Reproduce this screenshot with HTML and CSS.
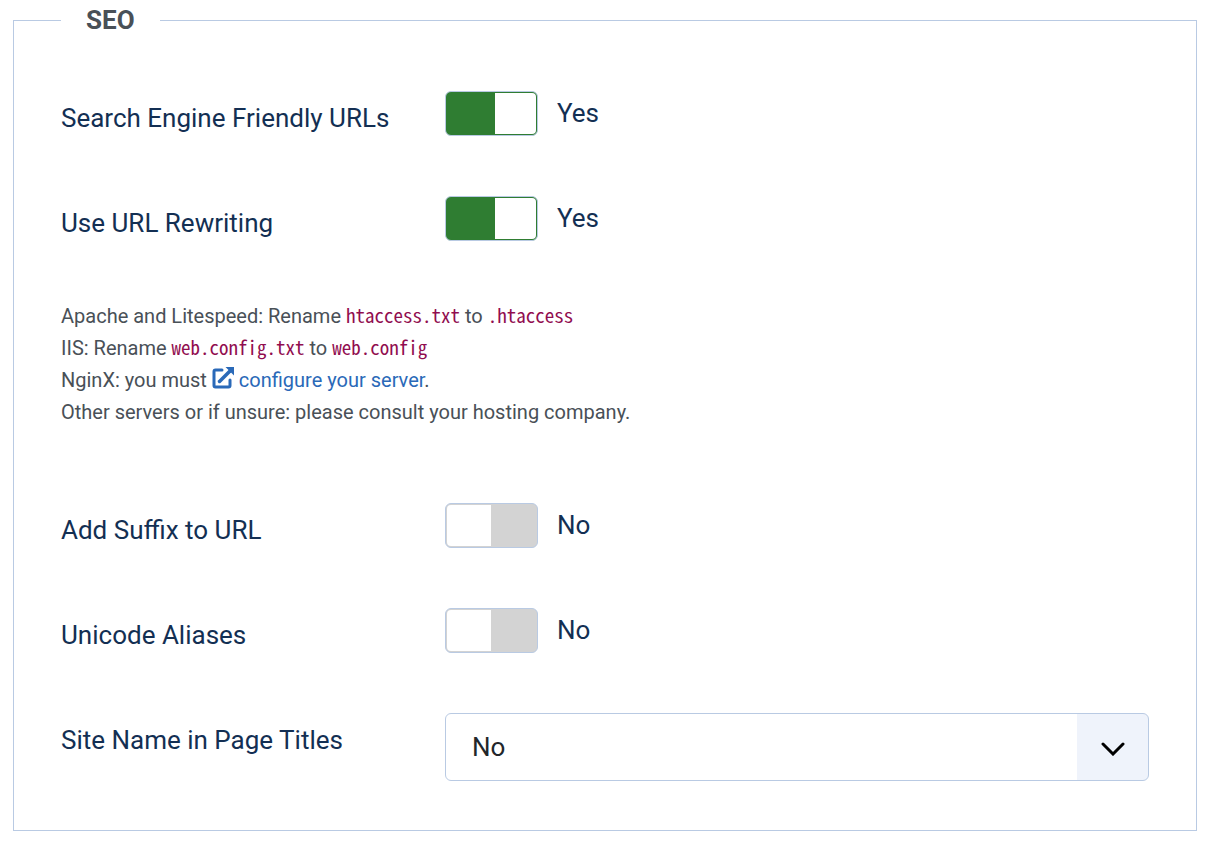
FILE: index.html
```html
<!DOCTYPE html>
<html lang="en">
  <head>
    <meta charset="UTF-8" />
    <meta name="viewport" content="width=device-width, initial-scale=1.0" />
    <title>SEO</title>
    <link rel="stylesheet" href="styles.css">
  </head>
  <body>
    <form>
      <fieldset class="options">
        <legend>SEO</legend>
        <div class="row">
          <label for="sef">Search Engine Friendly URLs</label>
          <div class="switch">
            <input type="checkbox" role="switch" id="sef" name="sef" checked />
            <span class="state"></span>
          </div>
        </div>
        <div class="row">
          <label for="sef_rewrite">Use URL Rewriting</label>
          <div class="switch">
            <input type="checkbox" role="switch" id="sef_rewrite" name="sef_rewrite" aria-describedby="rewrite_help" checked />
            <span class="state"></span>
          </div>
        </div>
        <div class="help" id="rewrite_help">
          Apache and Litespeed: Rename <code>htaccess.txt</code> to <code>.htaccess</code><br>
          IIS: Rename <code>web.config.txt</code> to <code>web.config</code><br>
          NginX: you must <a href="#"><svg class="external" viewBox="0 0 22 22" aria-hidden="true"><path d="M10 3H3.5Q2 3 2 4.500V18.500Q2 20 3.500 20H16.500Q18 20 18 18.500V13" fill="none" stroke="currentColor" stroke-width="3" stroke-linecap="round" /><path d="M7.500 14.500L18 4" fill="none" stroke="currentColor" stroke-width="3.500" stroke-linecap="round" /><path d="M13.500 0H22V8.500Z" fill="currentColor" /></svg> configure your server</a>.<br>
          Other servers or if unsure: please consult your hosting company.
        </div>
        <div class="row">
          <label for="sef_suffix">Add Suffix to URL</label>
          <div class="switch">
            <input type="checkbox" role="switch" id="sef_suffix" name="sef_suffix" />
            <span class="state"></span>
          </div>
        </div>
        <div class="row">
          <label for="unicodeslugs">Unicode Aliases</label>
          <div class="switch">
            <input type="checkbox" role="switch" id="unicodeslugs" name="unicodeslugs" />
            <span class="state"></span>
          </div>
        </div>
        <div class="row">
          <label for="sitename_pagetitles">Site Name in Page Titles</label>
          <div class="select">
            <select id="sitename_pagetitles" name="sitename_pagetitles">
              <option value="1">Before</option>
              <option value="2">After</option>
              <option value="0" selected>No</option>
            </select>
            <svg viewBox="0 0 24 14" aria-hidden="true"><path d="M2 2L12 12L22 2" fill="none" stroke="#000" stroke-width="3" stroke-linecap="round" /></svg>
          </div>
        </div>
      </fieldset>
    </form>
  </body>
</html>
```

FILE: styles.css
```css
body {
  margin: 0;
  background: #fff;
  color: #132f53;
  font-family: Roboto, sans-serif;
  font-size: 26px;
  line-height: 40px;
}
.options {
  margin: 0 9px 0 13px;
  padding: 51px 47px 49px;
  border: 1px solid #b9cae3;
}
legend {
  padding: 0 25px;
  color: #495057;
  font-weight: 700;
}
.row {
  display: grid;
  grid-template-columns: 384px 1fr;
  align-items: start;
}
.row + .row {
  margin-top: 58px;
}
label {
  padding-top: 7px;
}
.switch {
  display: flex;
  align-items: flex-start;
  gap: 19px;
}
.switch input {
  appearance: none;
  box-sizing: border-box;
  width: 93px;
  height: 45px;
  margin: 0;
  padding: 1px;
  border: 1px solid #b9cae3;
  border-radius: 6px;
  background: linear-gradient(to right, #fff 44px, #d3d3d3 44px) content-box, #d3d3d3;
  cursor: pointer;
}
.switch input:checked {
  background: linear-gradient(to right, #2f7d32 48px, #fff 48px) content-box, #2f7d32;
}
.state {
  line-height: 44px;
}
.state::before {
  content: "No";
}
input:checked + .state::before {
  content: "Yes";
}
.help {
  margin: 57px 0 75px;
  color: #495057;
  font-size: 20px;
  line-height: 32px;
}
.help code {
  color: #910d4f;
  font-family: "Noto Sans Mono CJK SC", "Liberation Mono", monospace;
  font-size: 19px;
  line-height: 1;
}
.help a {
  color: #2a69b8;
  text-decoration: none;
}
.external {
  width: 22px;
  height: 22px;
  vertical-align: -2px;
}
.select {
  display: grid;
  grid-template-columns: 1fr 72px;
  align-items: center;
}
.select select {
  grid-area: 1 / 1 / 2 / 3;
  appearance: none;
  height: 68px;
  padding: 0 98px 0 26px;
  border: 1px solid #b9cae3;
  border-radius: 6px;
  background: linear-gradient(to left, #eff3fb 71px, #fff 71px);
  color: #22262a;
  font: inherit;
}
.select svg {
  grid-area: 1 / 2;
  justify-self: center;
  width: 24px;
  height: 14px;
  margin-top: 4px;
  pointer-events: none;
}
```
